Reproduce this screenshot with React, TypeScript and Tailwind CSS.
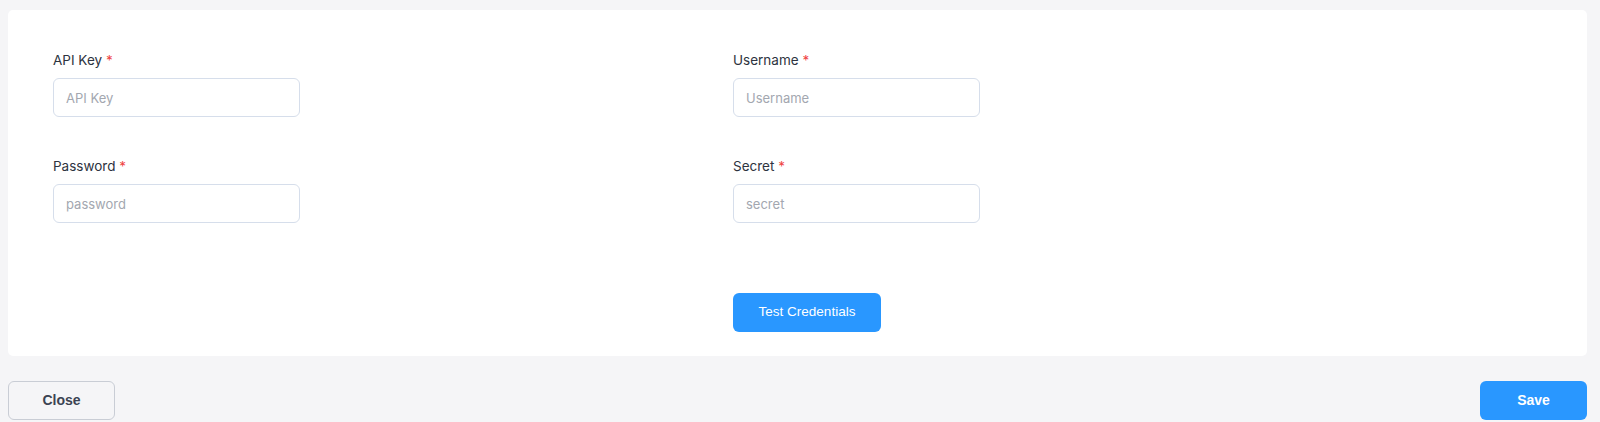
import React from "react";

function Field({ label, placeholder }: { label: string; placeholder: string }) {
  return (
    <div className="flex flex-col">
      <label className="text-[13.5px] leading-5 text-[#2d3340] mb-2">
        {label} <span className="text-[#ef4444]">*</span>
      </label>
      <input
        placeholder={placeholder}
        className="w-[247px] h-[39px] rounded-[6px] border border-[#d6deeb] bg-white px-3 text-[13px] text-[#2d3340] placeholder:text-[#a3a7b0] outline-none"
      />
    </div>
  );
}

export default function App() {
  return (
    <div className="min-h-[422px] bg-[#f5f5f7] px-2 pt-[10px] font-['Inter',sans-serif]">
      <div className="w-[1579px] rounded-[5px] bg-white pl-[45px] pt-[40px] pb-[24px]">
        <div className="grid grid-cols-[680px_1fr] gap-y-[39px]">
          <Field label="API Key" placeholder="API Key" />
          <Field label="Username" placeholder="Username" />
          <Field label="Password" placeholder="password" />
          <Field label="Secret" placeholder="secret" />
          <div />
          <div className="pt-[31px]">
            <button className="h-[39px] w-[148px] rounded-[6px] bg-[#2997ff] text-[13.5px] text-white font-['Liberation_Sans',Arial,sans-serif]">
              Test Credentials
            </button>
          </div>
        </div>
      </div>
      <div className="mt-[25px] flex w-[1579px] items-center justify-between">
        <button className="h-[39px] w-[107px] rounded-[6px] border border-[#c9cdd5] bg-[#f5f5f7] text-[14px] font-bold text-[#3b4352] font-['Liberation_Sans',Arial,sans-serif]">
          Close
        </button>
        <button className="h-[39px] w-[107px] rounded-[6px] bg-[#2997ff] text-[14px] font-bold text-white font-['Liberation_Sans',Arial,sans-serif]">
          Save
        </button>
      </div>
    </div>
  );
}
